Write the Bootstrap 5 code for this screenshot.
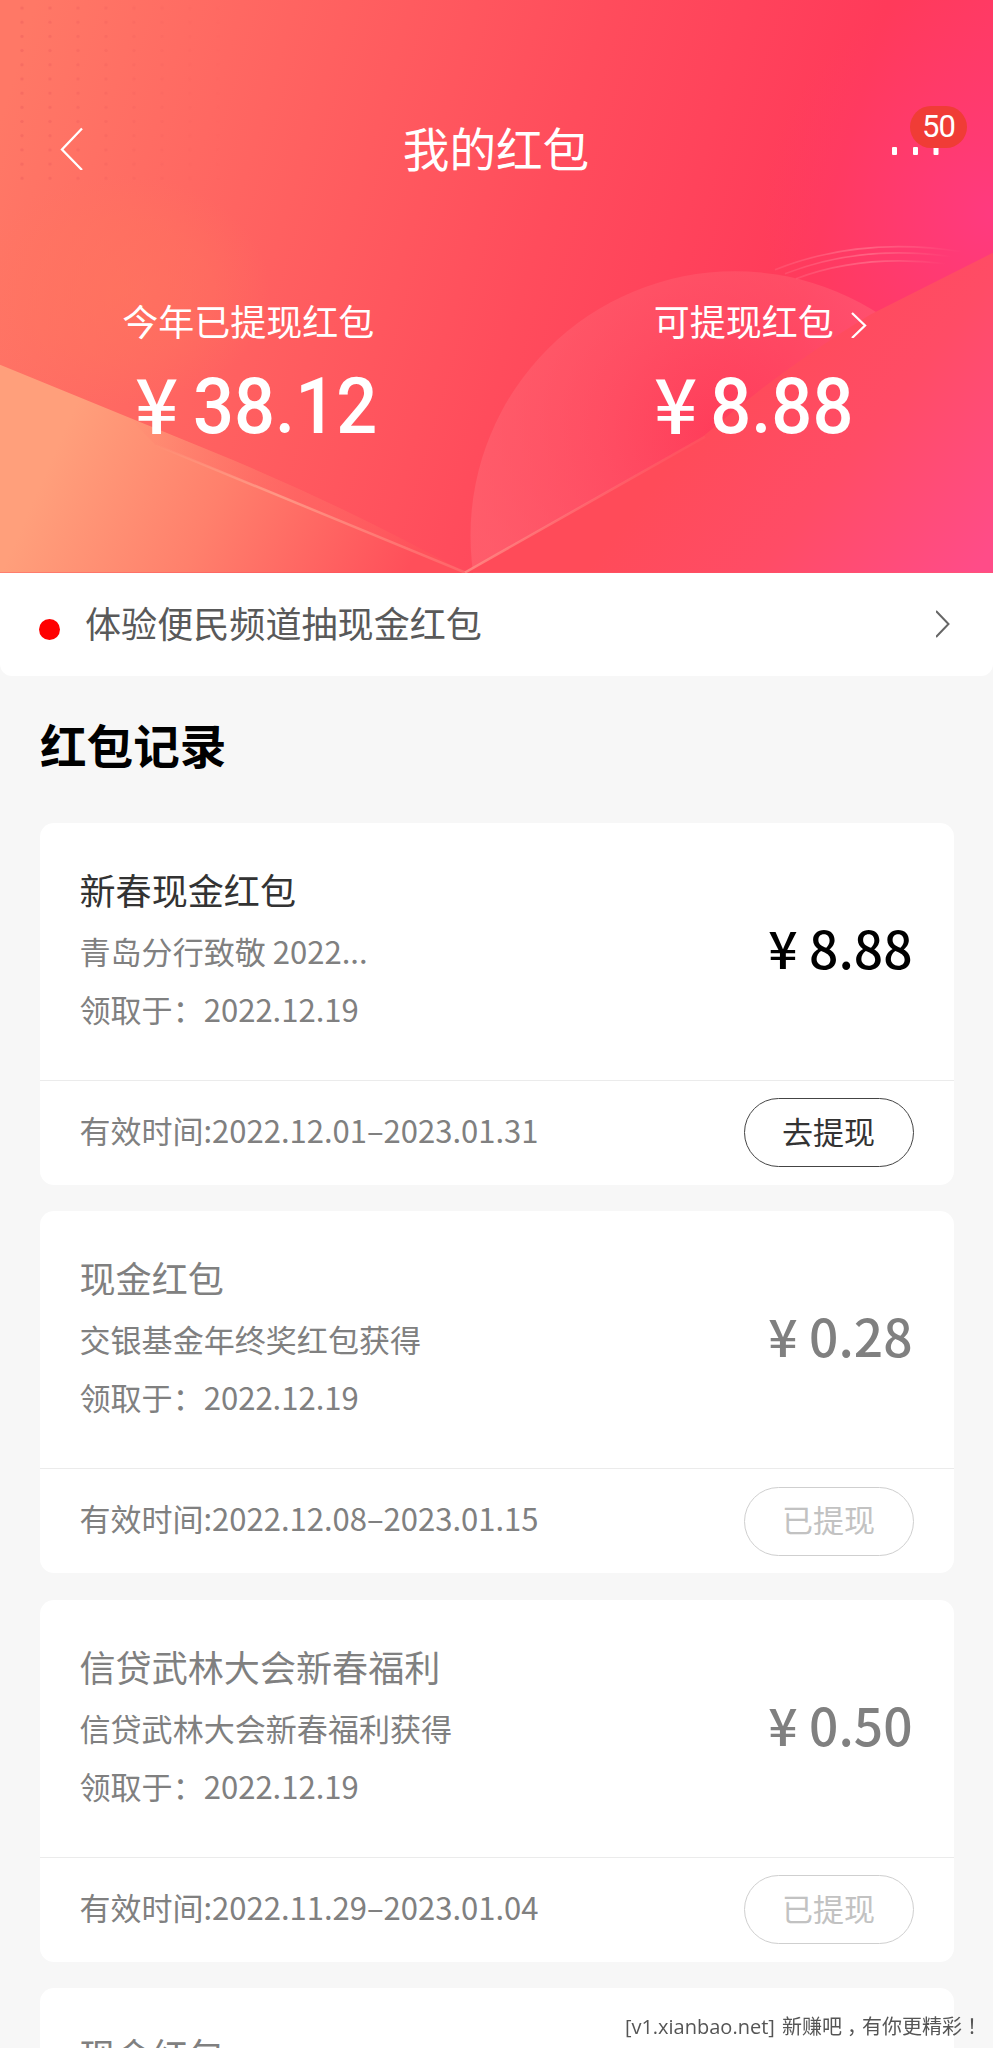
<!DOCTYPE html>
<html lang="zh-CN">
<head>
<meta charset="utf-8">
<meta name="viewport" content="width=device-width, initial-scale=1">
<title>我的红包</title>
<link href="https://cdn.jsdelivr.net/npm/bootstrap@5.3.0/dist/css/bootstrap.min.css" rel="stylesheet">
<style>
  html, body { height: 2048px; overflow: hidden; }
  body { background: #f7f7f7; font-family: "Noto Sans CJK SC", sans-serif; color: #808080; }
  .hero { height: 572.5px; background: #ff4f5c; }
  .hero-art { width: 100%; height: 100%; }
  .topbar { padding: 113px 47px 0 59px; }
  .topbar-side { width: 120px; height: 68px; }
  .topbar-side:last-child { width: 133px; }
  .topbar-title { font-size: 46.6px; line-height: 68px; }
  .more { width: 50px; height: 8px; margin-right: 4px; margin-top: 8px; }
  .msg-count { top: -7px; right: -21px; width: 57px; height: 42px; border-radius: 21px; background: #f03c36; font: 31px/41px Roboto, sans-serif; letter-spacing: -.8px; text-align: center; }
  .totals { padding-top: 112px; }
  .total-label { font-size: 36px; line-height: 54px; }
  .has-arrow { padding-left: 32px; }
  .has-arrow svg { position: relative; top: 4px; }
  .total-sum { font: 500 78.5px/96px Roboto, sans-serif; margin-top: 5px; padding-left: 14px; gap: 16px; }
  .total-sum b { font-weight: 500; transform: scaleX(.92); margin: 0 -2%; padding-top: 6px; }
  .yen-lg { font: 500 76px/94px "Noto Sans CJK SC", sans-serif; padding-top: 2px; }
  .promo { height: 103.5px; border-radius: 0 0 12px 12px; padding: 0 41px 0 39px; font-size: 36.1px; color: #595959; }
  .promo-dot { width: 21px; height: 21px; background: #f00; margin: 10px 25px 0 0; }
  .promo-text { padding-bottom: 5px; }
  .section-title { font-size: 46.6px; line-height: 70px; margin: 32.5px 0 44px; padding-left: 40px; color: #000; }
  .records { padding: 0 39.5px 0 40px; gap: 26.6px; }
  .record { height: 362px; border-radius: 14px; flex: none; }
  .record-main { height: 257px; padding: 40px 41px 0 39.5px; }
  .record-name { font-size: 36.1px; line-height: 53px; margin-bottom: 6px; }
  .record-line { font-size: 31.05px; line-height: 58px; }
  .record-sum { font-size: 51.5px; line-height: 80px; font-weight: 500; margin-top: 44px; }
  .record-foot { height: 105px; border-top: 1px solid #ebebeb; padding: 0 40px 0 39.5px; font-size: 31px; }
  .record-foot span { padding-bottom: 5px; }
  .pill { width: 170px; height: 69px; border: 1px solid #cfcfcf; border-radius: 35px; color: #c2c2c2; font-size: 31px; line-height: 60px; padding: 0 0 4px; background: none; }
  .is-open .record-name { color: #333; }
  .is-open .record-sum { color: #000; }
  .is-open .pill { color: #333; border-color: #444; }
  .site-mark { right: 11px; bottom: 5px; font: 20px/32px "Open Sans", "Noto Sans CJK SC", sans-serif; color: #555; white-space: nowrap; word-spacing: 2px; }
  .mark-comma { padding-left: 5px; margin-right: -5px; }
  .mark-stop { font-family: "Noto Sans CJK TC", sans-serif; }
</style>
</head>
<body>
<header class="hero position-relative text-white">
  <svg class="hero-art position-absolute top-0 start-0" viewBox="0 0 993 573" preserveAspectRatio="none" aria-hidden="true">
    <defs>
      <linearGradient id="base" gradientUnits="userSpaceOnUse" x1="0" y1="120" x2="960" y2="400">
        <stop offset="0" stop-color="#ff7866"/><stop offset=".3" stop-color="#ff6060"/><stop offset=".55" stop-color="#ff4c5c"/><stop offset=".82" stop-color="#ff3a5a"/><stop offset="1" stop-color="#ff3a6a"/>
      </linearGradient>
      <radialGradient id="magenta" gradientUnits="userSpaceOnUse" cx="993" cy="215" r="230">
        <stop offset="0" stop-color="#ff3a82" stop-opacity=".9"/><stop offset="1" stop-color="#ff3a70" stop-opacity="0"/>
      </radialGradient>
      <linearGradient id="flapL" gradientUnits="userSpaceOnUse" x1="60" y1="440" x2="400" y2="590">
        <stop offset="0" stop-color="#ff9f7b"/><stop offset=".45" stop-color="#ff806c"/><stop offset="1" stop-color="#ff4f5a"/>
      </linearGradient>
      <linearGradient id="band" gradientUnits="userSpaceOnUse" x1="130" y1="0" x2="465" y2="0">
        <stop offset="0" stop-color="#ff5a60" stop-opacity="0"/><stop offset=".5" stop-color="#ff5a60" stop-opacity=".5"/><stop offset="1" stop-color="#ff5a60" stop-opacity=".2"/>
      </linearGradient>
      <linearGradient id="flapR" gradientUnits="userSpaceOnUse" x1="720" y1="400" x2="960" y2="590">
        <stop offset="0" stop-color="#ff4b59"/><stop offset=".45" stop-color="#ff4c66"/><stop offset="1" stop-color="#ff4c88"/>
      </linearGradient>
      <radialGradient id="disc" gradientUnits="userSpaceOnUse" cx="710" cy="430" r="250">
        <stop offset="0" stop-color="#ff6878" stop-opacity="0"/><stop offset=".4" stop-color="#ff6878" stop-opacity=".25"/><stop offset="1" stop-color="#ff6a76" stop-opacity=".55"/>
      </radialGradient>
      <radialGradient id="glow"><stop offset="0" stop-color="#ff765e" stop-opacity=".6"/><stop offset=".6" stop-color="#ff765e" stop-opacity=".35"/><stop offset="1" stop-color="#ff765e" stop-opacity="0"/></radialGradient>
      <linearGradient id="arc"><stop offset="0" stop-color="#ff7f95" stop-opacity=".25"/><stop offset=".5" stop-color="#ff7f95" stop-opacity=".6"/><stop offset="1" stop-color="#ff7f95" stop-opacity="0"/></linearGradient>
      <linearGradient id="foldL"><stop offset="0" stop-color="#ffb59a" stop-opacity="0"/><stop offset=".4" stop-color="#ffa08c" stop-opacity=".8"/><stop offset="1" stop-color="#ff7a78" stop-opacity=".5"/></linearGradient>
      <linearGradient id="foldR"><stop offset="0" stop-color="#ff8f88" stop-opacity=".8"/><stop offset="1" stop-color="#ff7a80" stop-opacity=".1"/></linearGradient>
      <pattern id="grain" width="28" height="14.2" patternUnits="userSpaceOnUse"><circle cx="22" cy="8" r="1.7" fill="#e8585a" opacity=".4"/></pattern>
      <linearGradient id="grainFade"><stop offset="0" stop-color="#fff"/><stop offset="1" stop-color="#000"/></linearGradient>
      <mask id="grainMask"><rect width="230" height="185" fill="url(#grainFade)"/></mask>
    </defs>
    <rect width="993" height="573" fill="url(#base)"/>
    <rect x="740" width="253" height="460" fill="url(#magenta)"/>
    <rect width="230" height="185" fill="url(#grain)" mask="url(#grainMask)"/>
    <ellipse cx="120" cy="290" rx="150" ry="115" fill="url(#glow)"/>
    <g fill="none" stroke="url(#arc)" stroke-width="1.6">
      <path d="M775 270Q860 236 962 252"/><path d="M785 274Q862 244 952 257"/><path d="M796 279Q862 254 946 264"/>
    </g>
    <circle cx="735" cy="536" r="264.500" fill="url(#disc)"/>
    <path d="M993 253L870 315Q780 370 703 437L465 573H993Z" fill="url(#flapR)"/>
    <path d="M0 365L212 452Q340 504 465 573H0Z" fill="url(#flapL)"/>
    <path d="M130 419L212 452Q340 504 465 573Q290 500 155 445Z" fill="url(#band)"/>
    <path d="M155 445Q290 500 465 573" fill="none" stroke="url(#foldL)" stroke-width="2.500"/>
    <path d="M465 573L705 437" fill="none" stroke="url(#foldR)" stroke-width="2.500"/>
  </svg>
  <div class="position-relative">
    <nav class="topbar d-flex justify-content-between align-items-center">
      <div class="topbar-side d-flex align-items-center">
        <svg width="26" height="46" viewBox="0 0 26 46" fill="none" stroke="#fff" stroke-width="2.300"><path d="M23 4.500L3 25.500L23 46"/></svg>
      </div>
      <div class="topbar-title">我的红包</div>
      <div class="topbar-side position-relative d-flex align-items-center justify-content-end">
        <svg class="more" viewBox="0 0 50 8" fill="#fff"><rect x="0" width="5" height="8" rx="1"/><rect x="21" width="5" height="8" rx="1"/><rect x="41.500" width="5" height="8" rx="1"/></svg>
        <span class="msg-count position-absolute">50</span>
      </div>
    </nav>
    <section class="totals row g-0 text-center">
      <div class="col-6">
        <div class="total-label">今年已提现红包</div>
        <div class="total-sum d-flex justify-content-center"><span class="yen-lg">¥</span><b>38.12</b></div>
      </div>
      <div class="col-6">
        <div class="total-label has-arrow d-flex justify-content-center align-items-center">可提现红包<svg class="ms-3" width="18" height="28" viewBox="0 0 18 28" fill="none" stroke="#fff" stroke-width="2.300"><path d="M2 3L15 15.500L2 28"/></svg></div>
        <div class="total-sum d-flex justify-content-center"><span class="yen-lg">¥</span><b>8.88</b></div>
      </div>
    </section>
  </div>
</header>

<a class="promo bg-white d-flex align-items-center text-decoration-none" href="#">
  <span class="promo-dot rounded-circle"></span>
  <span class="promo-text">体验便民频道抽现金红包</span>
  <svg class="ms-auto" width="16" height="28" viewBox="0 0 16 28" fill="none" stroke="#666" stroke-width="2"><path d="M0 1L12.500 14L0 27"/></svg>
</a>

<h2 class="section-title fw-bold">红包记录</h2>

<main class="records d-flex flex-column">
  <article class="record bg-white is-open">
    <div class="record-main d-flex justify-content-between">
      <div>
        <div class="record-name">新春现金红包</div>
        <div class="record-line">青岛分行致敬 2022...</div>
        <div class="record-line">领取于：2022.12.19</div>
      </div>
      <div class="record-sum">¥ 8.88</div>
    </div>
    <div class="record-foot d-flex align-items-center justify-content-between">
      <span>有效时间:2022.12.01–2023.01.31</span>
      <button class="pill" type="button">去提现</button>
    </div>
  </article>
  <article class="record bg-white">
    <div class="record-main d-flex justify-content-between">
      <div>
        <div class="record-name">现金红包</div>
        <div class="record-line">交银基金年终奖红包获得</div>
        <div class="record-line">领取于：2022.12.19</div>
      </div>
      <div class="record-sum">¥ 0.28</div>
    </div>
    <div class="record-foot d-flex align-items-center justify-content-between">
      <span>有效时间:2022.12.08–2023.01.15</span>
      <button class="pill" type="button">已提现</button>
    </div>
  </article>
  <article class="record bg-white">
    <div class="record-main d-flex justify-content-between">
      <div>
        <div class="record-name">信贷武林大会新春福利</div>
        <div class="record-line">信贷武林大会新春福利获得</div>
        <div class="record-line">领取于：2022.12.19</div>
      </div>
      <div class="record-sum">¥ 0.50</div>
    </div>
    <div class="record-foot d-flex align-items-center justify-content-between">
      <span>有效时间:2022.11.29–2023.01.04</span>
      <button class="pill" type="button">已提现</button>
    </div>
  </article>
  <article class="record bg-white">
    <div class="record-main">
      <div class="record-name">现金红包</div>
    </div>
  </article>
</main>
<div class="site-mark position-fixed">[v1.xianbao.net] 新赚吧<span class="mark-comma">，</span>有你更精彩<span class="mark-stop" lang="zh-TW">！</span></div>
<script src="https://cdn.jsdelivr.net/npm/bootstrap@5.3.0/dist/js/bootstrap.bundle.min.js"></script>
</body>
</html>
